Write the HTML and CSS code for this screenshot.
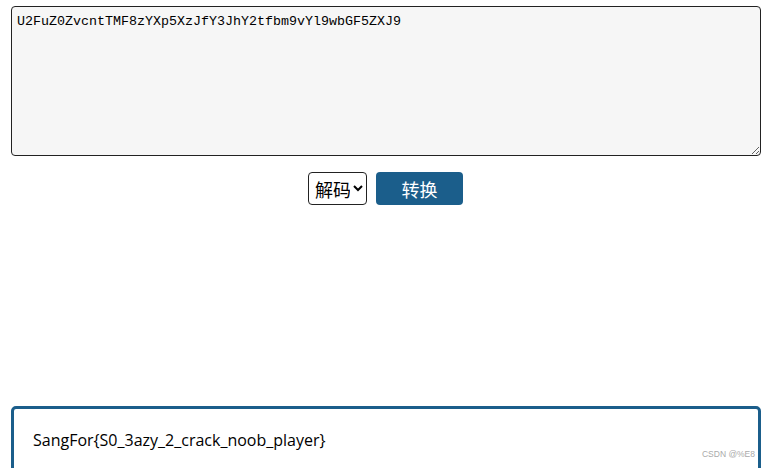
FILE: index.html
```html
<!DOCTYPE html>
<html lang="zh">
<head>
<meta charset="utf-8">
<title>Base64</title>
<link rel="stylesheet" href="styles.css">
</head>
<body>
<div class="page">
  <textarea class="input">U2FuZ0ZvcntTMF8zYXp5XzJfY3JhY2tfbm9vYl9wbGF5ZXJ9</textarea>
  <div class="controls">
    <select class="mode">
      <option>解码</option>
      <option>编码</option>
    </select>
    <button class="convert">转换</button>
  </div>
  <div class="result">
    <p class="result-text">SangFor{S0_3azy_2_crack_noob_player}</p>
    <span class="watermark">CSDN @%E8</span>
  </div>
</div>
</body>
</html>
```

FILE: styles.css
```css
html, body {
  margin: 0;
  padding: 0;
  background: #fff;
}
.page {
  padding: 6px 10px 0 11px;
  display: flex;
  flex-direction: column;
}
.input {
  box-sizing: border-box;
  width: 750px;
  height: 150px;
  margin: 0;
  padding: 7px 5px;
  border: 1px solid #222;
  border-radius: 4px;
  background: #f6f6f6;
  font-family: "Liberation Mono", monospace;
  font-size: 13.33px;
  line-height: 16px;
  color: #000;
  resize: both;
  outline: none;
}
.controls {
  margin-top: 16px;
  display: flex;
  justify-content: center;
  gap: 9px;
  height: 33px;
  padding-right: 1px;
}
.mode {
  box-sizing: border-box;
  width: 59px;
  height: 33px;
  border: 1px solid #222;
  border-radius: 4px;
  background: #fff;
  font-family: "Noto Sans CJK SC", sans-serif;
  font-size: 18px;
  color: #000;
  padding: 0 0 0 2px;
}
.convert {
  box-sizing: border-box;
  width: 87px;
  height: 33px;
  border: none;
  border-radius: 4px;
  background: #1b5e8b;
  color: #fff;
  font-family: "Noto Sans CJK SC", sans-serif;
  font-size: 18px;
  padding: 0;
}
.result {
  position: relative;
  box-sizing: border-box;
  width: 750px;
  height: 80px;
  margin-top: 201px;
  border: 3px solid #1b5e8b;
  border-radius: 5px;
  padding: 21px 19px;
}
.result-text {
  margin: 0;
  font-family: "Open Sans", sans-serif;
  font-size: 16px;
  line-height: 20px;
  color: #000;
}
.watermark {
  position: absolute;
  right: 3px;
  top: 40px;
  font-family: "Liberation Sans", sans-serif;
  font-size: 8.5px;
  color: #aaa;
}
```
